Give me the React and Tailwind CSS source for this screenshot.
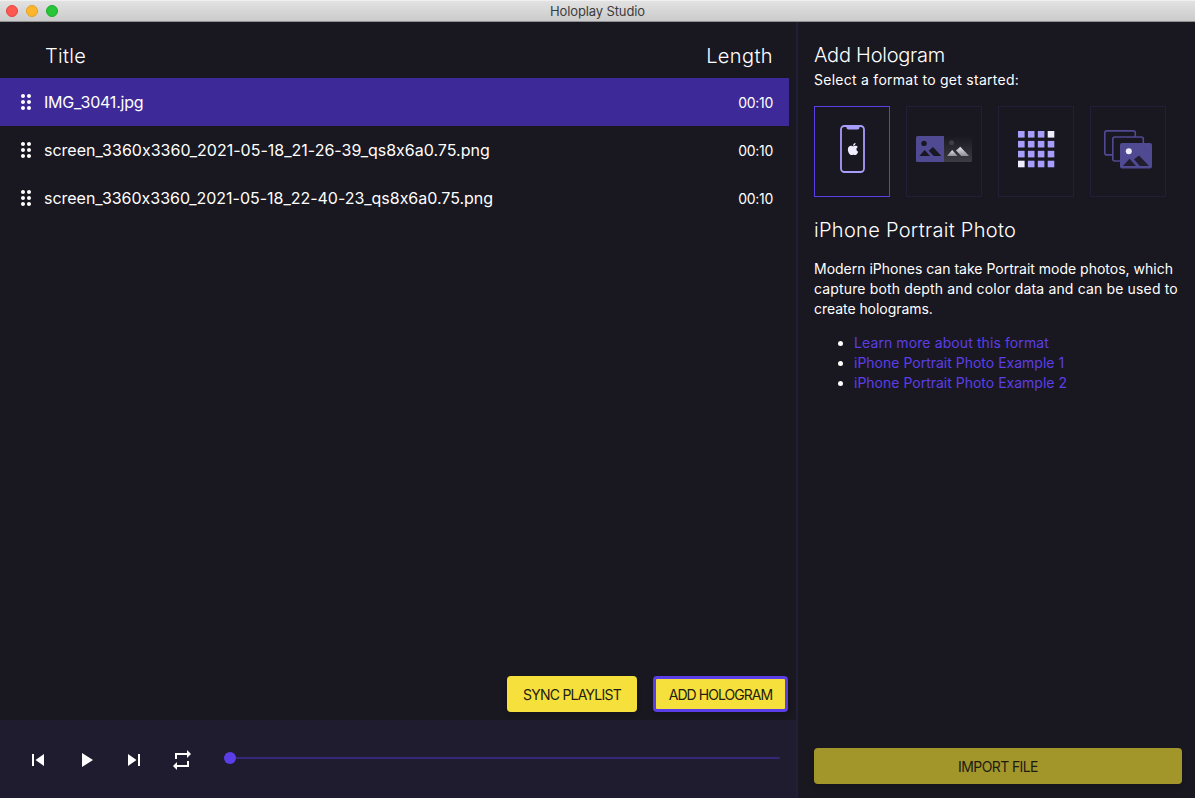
import React, { useState } from "react";
import {
  MdDragIndicator,
  MdPlayArrow,
  MdRepeat,
  MdSkipNext,
  MdSkipPrevious,
} from "react-icons/md";
import { FaApple } from "react-icons/fa";

const playlist = [
  { title: "IMG_3041.jpg", length: "00:10", tracking: "tracking-[-0.2px]" },
  {
    title: "screen_3360x3360_2021-05-18_21-26-39_qs8x6a0.75.png",
    length: "00:10",
    tracking: "tracking-[0.01px]",
  },
  {
    title: "screen_3360x3360_2021-05-18_22-40-23_qs8x6a0.75.png",
    length: "00:10",
    tracking: "tracking-[-0.02px]",
  },
];

const links = [
  { label: "Learn more about this format", tracking: "tracking-[0.1px]" },
  { label: "iPhone Portrait Photo Example 1", tracking: "tracking-normal" },
  { label: "iPhone Portrait Photo Example 2", tracking: "tracking-normal" },
];

function PhoneIcon() {
  return (
    <div className="relative left-px flex items-center justify-center">
      <svg width="26" height="48" viewBox="0 0 26 48" fill="none">
        <rect x="1" y="1" width="23" height="46" rx="3.4" stroke="#a79dfb" strokeWidth="1.8" />
        <path d="M5.500 1h14v1.600q0 1.900-1.900 1.900H8.400q-1.900 0-1.900-1.900z" fill="#a79dfb" />
      </svg>
      <FaApple className="absolute left-[6px] top-[17px] text-[#f0edff]" size={14} />
    </div>
  );
}

function DepthIcon() {
  return (
    <svg width="56" height="26" viewBox="0 0 56 26">
      <defs>
        <linearGradient id="depthBg" x1="0" y1="0" x2="0" y2="1">
          <stop offset="0" stopColor="#191720" />
          <stop offset="1" stopColor="#3d3c46" />
        </linearGradient>
        <linearGradient id="depthHill" x1="0" y1="0" x2="0" y2="1">
          <stop offset="0" stopColor="#e8e7ee" />
          <stop offset="1" stopColor="#8d8c97" />
        </linearGradient>
      </defs>
      <path d="M1.500 0H28v26H1.500Q0 26 0 24.500V1.500Q0 0 1.500 0z" fill="#4f4a91" />
      <path d="M28 0h26.500Q56 0 56 1.500v23q0 1.500-1.500 1.500H28z" fill="url(#depthBg)" />
      <circle cx="8" cy="7.400" r="2.700" fill="#191720" />
      <path d="M3.300 20l5.400-6 5.300 6z" fill="#191720" />
      <path d="M12.800 14.700L17 11l8.300 9h-7.600z" fill="#191720" />
      <circle cx="35.500" cy="6.800" r="2.500" fill="#3f3e49" />
      <path d="M31 20l5.200-6 5.300 6z" fill="url(#depthHill)" />
      <path d="M40 14.500l4.300-3.700 8.800 9.200h-7.900z" fill="url(#depthHill)" />
    </svg>
  );
}

function QuiltIcon() {
  return (
    <svg width="37" height="37" viewBox="0 0 37 37" className="relative top-px">
      {Array.from({ length: 16 }).map((_, i) => (
        <rect
          key={i}
          x={(i % 4) * 9.9}
          y={Math.floor(i / 4) * 9.9}
          width="6.6"
          height="6.6"
          fill={i === 3 || i === 12 ? "#f0edff" : "#a79dfb"}
        />
      ))}
    </svg>
  );
}

function PhotosIcon() {
  return (
    <svg width="48" height="39" viewBox="0 0 48 39" className="relative top-px">
      <rect x=".8" y=".9" width="30.500" height="24" rx="2" fill="#191720" stroke="#4f4a91" strokeWidth="1.600" />
      <rect x="8.800" y="7" width="30.500" height="24" rx="2" fill="#191720" stroke="#4f4a91" strokeWidth="1.600" />
      <rect x="16" y="13" width="32" height="25.500" rx="2" fill="#4f4a91" />
      <circle cx="24.800" cy="21.300" r="3" fill="#f0edff" />
      <path d="M19 36l6.500-7.200L32 36z" fill="#211e30" />
      <path d="M30 29.200l5-3.700L45 36h-9.300z" fill="#211e30" />
    </svg>
  );
}

const formats = [PhoneIcon, DepthIcon, QuiltIcon, PhotosIcon];

function TitleBar() {
  return (
    <header className="h-[22px] shrink-0 grid grid-cols-[1fr_auto_1fr] items-center border-t border-b border-t-[#f0f0f0] border-b-[#8f8f8f] bg-linear-to-b from-[#e2e2e2] to-[#cbcbcb]">
      <div className="flex gap-2 pl-1.5">
        <span className="size-3 rounded-full bg-[#fe5850] border border-[#e2463f]" />
        <span className="size-3 rounded-full bg-[#fdb52b] border border-[#e0a12a]" />
        <span className="size-3 rounded-full bg-[#27c538] border border-[#1dac2b]" />
      </div>
      <h1 className="text-[13px] leading-5 tracking-[-0.12px] text-[#3c3c3c]">Holoplay Studio</h1>
      <span />
    </header>
  );
}

function Player() {
  return (
    <footer className="h-[78px] shrink-0 flex items-center bg-[#1f1c30] pl-[26px] pr-4 pt-[2px] text-white">
      <div className="flex gap-6">
        <MdSkipPrevious size={24} />
        <MdPlayArrow size={24} />
        <MdSkipNext size={24} />
        <MdRepeat size={24} />
      </div>
      <div className="flex flex-1 items-center ml-[30px] -mt-1">
        <span className="size-3 rounded-full bg-[#5c3ee8]" />
        <span className="h-0.5 flex-1 rounded-r bg-[#35277a]" />
      </div>
    </footer>
  );
}

function App() {
  const [selected, setSelected] = useState(0);
  const [format, setFormat] = useState(0);

  return (
    <div className="h-screen flex flex-col overflow-hidden bg-[#191720] text-white font-['Inter',sans-serif]">
      <TitleBar />
      <div className="flex flex-1 min-h-0">
        <main className="w-[798px] shrink-0 flex flex-col border-r-2 border-[#211f38]">
          <div className="h-14 flex items-center justify-between pl-[45px] pr-[23px] pt-3 text-xl font-light">
            <span className="tracking-[0.3px]">Title</span>
            <span className="tracking-[0.4px]">Length</span>
          </div>
          <ul className="flex-1 mr-[7px]">
            {playlist.map((item, i) => (
              <li
                key={item.title}
                onClick={() => setSelected(i)}
                className={`h-12 flex items-center pl-3.5 pr-4 ${selected === i ? "bg-[#3d2a98]" : ""}`}
              >
                <MdDragIndicator size={24} className="mr-1.5" />
                <span className={`flex-1 text-base whitespace-nowrap ${item.tracking}`}>
                  {item.title}
                </span>
                <span className="pt-px text-sm tracking-[-0.3px]">{item.length}</span>
              </li>
            ))}
          </ul>
          <div className="flex justify-end gap-4 pr-2 pb-2">
            <button className="w-[130px] h-9 rounded bg-[#f6e13c] pt-px text-[#222013] text-sm tracking-[-0.77px] shadow-md">
              SYNC PLAYLIST
            </button>
            <button className="w-[135px] h-9 rounded border-3 border-[#5c3ee8] bg-[#f6e13c] pt-px text-[#222013] text-sm tracking-[-0.95px] shadow-md whitespace-nowrap">
              ADD HOLOGRAM
            </button>
          </div>
          <Player />
        </main>

        <aside className="flex-1 flex flex-col pl-4 pr-[13px] pb-3.5">
          <h2 className="pt-[19px] text-xl leading-7 font-light tracking-[-0.25px]">Add Hologram</h2>
          <p className="mt-px text-sm leading-5 tracking-[0.26px]">Select a format to get started:</p>
          <div className="flex gap-4 mt-4">
            {formats.map((Icon, i) => (
              <button
                key={i}
                onClick={() => setFormat(i)}
                className={`w-[76px] h-[91px] flex items-center justify-center pb-1.5 border ${
                  format === i ? "border-[#5c3ee8]" : "border-[#211f38]"
                }`}
              >
                <Icon />
              </button>
            ))}
          </div>
          <h2 className="mt-[19px] text-xl leading-7 font-light tracking-[0.3px] whitespace-nowrap">
            iPhone Portrait Photo
          </h2>
          <p className="mt-[15px] text-sm leading-5 whitespace-nowrap">
            <span>Modern iPhones can take Portrait mode photos, which</span>
            <br />
            <span className="tracking-[0.15px]">capture both depth and color data and can be used to</span>
            <br />
            <span className="tracking-[-0.05px]">create holograms.</span>
          </p>
          <ul className="mt-3.5 pl-10 list-disc text-sm leading-5 whitespace-nowrap">
            {links.map((link) => (
              <li key={link.label}>
                <a className={`text-[#5c3ee8] ${link.tracking}`}>{link.label}</a>
              </li>
            ))}
          </ul>
          <button className="mt-auto h-9 rounded bg-[#a2962b] pt-px text-[#1c1b14] text-sm tracking-[-0.6px] shadow-md">
            IMPORT FILE
          </button>
        </aside>
      </div>
    </div>
  );
}

export default App;
